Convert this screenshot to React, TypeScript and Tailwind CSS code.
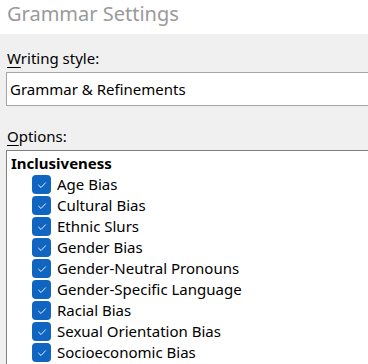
import React from "react";

const items = [
  "Age Bias",
  "Cultural Bias",
  "Ethnic Slurs",
  "Gender Bias",
  "Gender-Neutral Pronouns",
  "Gender-Specific Language",
  "Racial Bias",
  "Sexual Orientation Bias",
  "Socioeconomic Bias",
];

function Check() {
  return (
    <span className="w-[19px] h-[19px] rounded-[4px] bg-[#0f65c0] flex items-center justify-center shrink-0">
      <svg width="12" height="12" viewBox="0 0 12 12" fill="none">
        <path d="M2.6 6.2 L5 8.5 L9.5 3.8" stroke="white" strokeWidth="0.9" strokeLinecap="round" strokeLinejoin="round" />
      </svg>
    </span>
  );
}

export default function App() {
  return (
    <div
      className="w-[368px] h-[364px] overflow-hidden bg-[#f0f0f0] text-[#000]"
      style={{ fontFamily: '"Noto Sans", "Open Sans", sans-serif' }}
    >
      <div className="h-[34px] bg-white pl-[7px] text-[20px] leading-[28px] text-[#9a9a9a]">
        Grammar Settings
      </div>
      <div className="pl-[6px] pt-[14px]">
        <div className="text-[15px] leading-[20px] pl-[1px]">
          <span className="underline underline-offset-[3px]">W</span>riting style:
        </div>
        <div className="mt-[4px] h-[34px] bg-white border-t border-b border-l border-[#a6a6a6] flex items-center pl-[3px] text-[15px]">
          Grammar &amp; Refinements
        </div>
        <div className="mt-[20px] text-[15px] leading-[20px] pl-[1px]">
          <span className="underline underline-offset-[3px]">O</span>ptions:
        </div>
        <div className="mt-[4px] bg-white border-t border-l border-[#7f7f7f] pt-[2px] h-[220px]">
          <div className="h-[21px] flex items-center pl-[4px] text-[15px] font-bold">Inclusiveness</div>
          {items.map((t) => (
            <div key={t} className="h-[21px] flex items-center pl-[25px] text-[15px]">
              <Check />
              <span className="ml-[6px]">{t}</span>
            </div>
          ))}
        </div>
      </div>
    </div>
  );
}
